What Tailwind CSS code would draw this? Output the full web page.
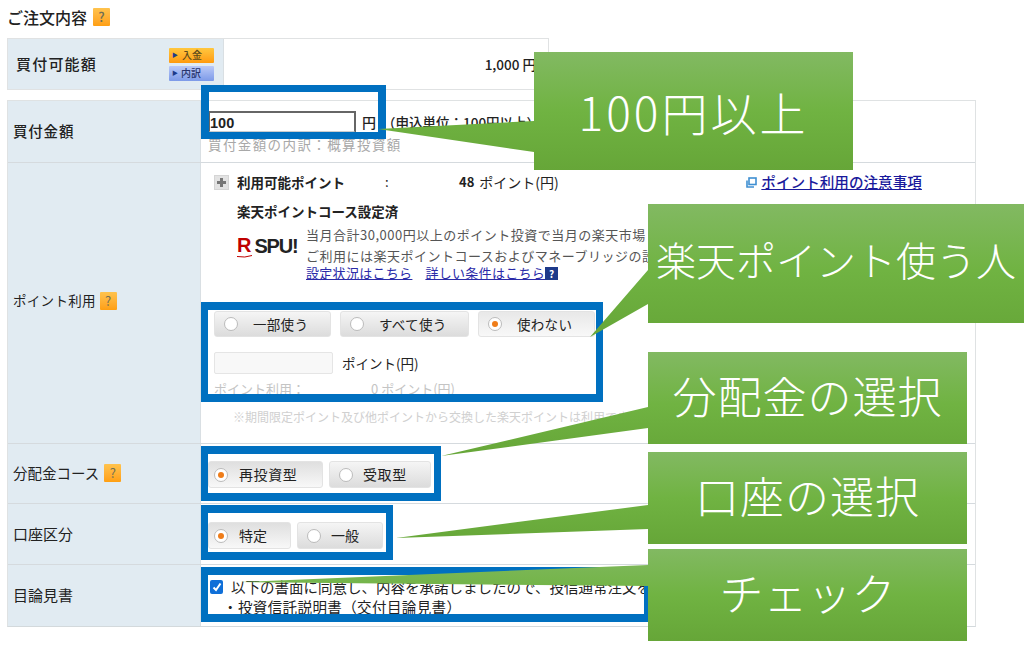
<!DOCTYPE html>
<html lang="ja">
<head>
    <meta charset="UTF-8">
    <title>ご注文内容</title>
    <script src="https://cdn.jsdelivr.net/npm/@tailwindcss/browser@4"></script>
</head>
<body class="bg-white">
<div class="relative w-[1024px] h-[649px] overflow-hidden text-[#222] text-[13px] font-['Noto_Sans_CJK_JP','Noto_Sans',sans-serif]">

    <!-- order form -->
    <div class="pl-[7px] pt-[7px]">
        <div class="flex items-center gap-[6px] h-[20px] font-medium text-[16px]">
            ご注文内容
            <span class="w-[17px] h-[18px] bg-linear-to-b from-[#ffc34d] to-[#ff9f10] text-[#6f6f55] text-[13px] leading-[18px] text-center rounded-[1px]">?</span>
        </div>

        <div class="mt-[11px] w-[542px] h-[52px] flex border border-[#e0e2e3]">
            <div class="w-[216px] bg-[#e1ebf2] flex items-center justify-between pl-[8px] pr-[9px] border-r border-[#d9dfe3]">
                <span class="font-medium text-[15px] tracking-[1.2px]">買付可能額</span>
                <div class="flex flex-col gap-[3px]">
                    <span class="w-[45px] h-[15px] flex items-center gap-[4px] pl-[3px] bg-linear-to-b from-[#ffc73e] to-[#ff9a0a] text-[10px] font-medium leading-none text-[#5d4a1b] rounded-[1px]"><span class="text-[#1d3a8a] text-[6px]">▶</span>入金</span>
                    <span class="w-[45px] h-[15px] flex items-center gap-[3px] pl-[3px] bg-linear-to-b from-[#bac9f7] to-[#7d9ae8] text-[10px] font-medium leading-none text-[#27346b] rounded-[1px]"><span class="text-[#1d3a8a] text-[6px]">▶</span>内訳</span>
                </div>
            </div>
            <div class="flex-1 flex items-center justify-end pr-[12px] font-medium text-[13.5px]">1,000 円</div>
        </div>

        <div class="mt-[10px] w-[969px] border border-[#dfe2e3] border-b-[#d3d9dc]">
            <!-- 買付金額 -->
            <div class="flex h-[62px] border-b border-[#d5dade]">
                <div class="w-[193px] bg-[#e1ebf2] border-r border-[#d9dfe3] flex items-center pl-[5px] pb-[1px] font-medium text-[14.5px] tracking-[0.8px]">買付金額</div>
                <div class="flex-1 pl-[7px] pt-[10px]">
                    <div class="flex items-center h-[22px]">
                        <div class="w-[148px] h-[22px] border-2 border-[#666] border-b-[#ccc] font-bold text-[14.5px] leading-[20px] font-['Liberation_Sans',sans-serif]">100</div>
                        <span class="ml-[6px] font-medium text-[14px]">円</span>
                        <span class="ml-[6px] font-medium text-[13.5px]">（申込単位：100円以上）</span>
                    </div>
                    <div class="mt-[1px] text-[13.5px] text-[#a8a8a8] leading-[20px] tracking-[1.4px]">買付金額の内訳：概算投資額</div>
                </div>
            </div>

            <!-- ポイント利用 -->
            <div class="flex h-[281px] border-b border-[#d5dade]">
                <div class="w-[193px] bg-[#e1ebf2] border-r border-[#d9dfe3] flex items-center gap-[4px] pl-[5px] pb-[5px] text-[13.5px] tracking-[0.3px]">
                    ポイント利用
                    <span class="w-[17px] h-[18px] bg-linear-to-b from-[#ffc34d] to-[#ff9f10] text-[#6f6f55] text-[13px] leading-[18px] text-center rounded-[1px]">?</span>
                </div>
                <div class="flex-1 pl-[13px] pt-[9px]">
                    <div class="flex items-center h-[20px]">
                        <span class="w-[15px] h-[15px] bg-[#e3e3e3] border border-[#d5d5d5] flex items-center justify-center">
                            <svg width="9" height="9" viewBox="0 0 9 9"><path d="M3 0h3v3h3v3H6v3H3V6H0V3h3z" fill="#777"/></svg>
                        </span>
                        <span class="ml-[8px] w-[148px] font-bold text-[13.5px]">利用可能ポイント</span>
                        <span class="w-[74px]">:</span>
                        <span class="font-bold">48</span>
                        <span class="ml-[5px] w-[267px] text-[14px]">ポイント(円)</span>
                        <svg width="11" height="11" viewBox="0 0 11 11" fill="none" stroke="#3f8fd2" stroke-width="1.6"><rect x="3" y="1" width="7" height="6.5"/><path d="M1 3.5v6.5h7"/></svg>
                        <a class="ml-[4px] text-[#1a1a9c] underline font-medium text-[14.6px]">ポイント利用の注意事項</a>
                    </div>
                    <div class="ml-[23px] mt-[9px] font-bold text-[13.5px] leading-[20px]">楽天ポイントコース設定済</div>
                    <div class="ml-[23px] mt-[4px] flex">
                        <div class="w-[69px] pt-[5px] flex items-center gap-[3px] h-[36px]">
                            <div class="relative">
                                <span class="font-bold text-[20px] leading-none text-[#bf0000] font-['Liberation_Sans',sans-serif]">R</span>
                                <svg class="absolute left-0 top-[20px]" width="15" height="3" viewBox="0 0 15 3"><path d="M0 1.5Q8 3 15 .5" stroke="#bf0000" stroke-width="1" fill="none"/></svg>
                            </div>
                            <span class="font-bold text-[20px] leading-none text-[#222] tracking-[-1.2px] font-['Liberation_Sans',sans-serif]">SPU!</span>
                        </div>
                        <div class="text-[#555] text-[13px] tracking-[0.5px] whitespace-nowrap">
                            <div class="leading-[20px]">当月合計30,000円以上のポイント投資で当月の楽天市場</div>
                            <div class="leading-[18px] mt-[2px]">ご利用には楽天ポイントコースおよびマネーブリッジの設定</div>
                            <div class="leading-[16px] flex items-center tracking-[0.3px]">
                                <a class="text-[#2b2ba8] underline">設定状況はこちら</a>
                                <a class="ml-[13px] text-[#2b2ba8] underline">詳しい条件はこちら</a>
                                <span class="w-[13px] h-[13px] bg-[#1e3a8a] text-white text-[10px] leading-[13px] text-center font-bold">?</span>
                            </div>
                        </div>
                    </div>
                    <div class="mt-[30px] flex gap-[9px] h-[26px] text-[13.5px] tracking-[0.3px]">
                        <div class="w-[117px] flex items-center bg-linear-to-b from-[#f5f5f5] to-[#dcdcdc] rounded-[3px] border border-[#e3e3e3] pl-[9px]">
                            <span class="w-[14px] h-[14px] rounded-full border border-[#bbb] bg-white"></span><span class="ml-[15px]">一部使う</span>
                        </div>
                        <div class="w-[129px] flex items-center bg-linear-to-b from-[#f5f5f5] to-[#dcdcdc] rounded-[3px] border border-[#e3e3e3] pl-[9px]">
                            <span class="w-[14px] h-[14px] rounded-full border border-[#bbb] bg-white"></span><span class="ml-[15px]">すべて使う</span>
                        </div>
                        <div class="w-[117px] flex items-center bg-linear-to-b from-[#e8e8e8] to-[#f8f8f8] rounded-[3px] border border-[#e3e3e3] pl-[9px]">
                            <span class="w-[14px] h-[14px] rounded-full border border-[#bbb] bg-white flex items-center justify-center"><span class="w-[6px] h-[6px] rounded-full bg-[#ef7d1a]"></span></span><span class="ml-[15px]">使わない</span>
                        </div>
                    </div>
                    <div class="mt-[15px] flex items-center h-[22px]">
                        <div class="w-[119px] h-[22px] bg-[#f8f8f8] border border-[#e5e5e5] rounded-[2px]"></div>
                        <span class="ml-[9px] text-[13.5px]">ポイント(円)</span>
                    </div>
                    <div class="mt-[5px] flex text-[#c4c4c4] leading-[20px]">
                        <span class="w-[157px]">ポイント利用：</span>
                        <span>0 ポイント(円)</span>
                    </div>
                    <div class="ml-[19px] mt-[8px] text-[#d0d0d0] text-[12px] leading-[20px] whitespace-nowrap">※期間限定ポイント及び他ポイントから交換した楽天ポイントは利用できません。</div>
                </div>
            </div>

            <!-- 分配金コース -->
            <div class="flex h-[60px] border-b border-[#d5dade]">
                <div class="w-[193px] bg-[#e1ebf2] border-r border-[#d9dfe3] flex items-center gap-[5px] pl-[5px] pb-[2px] text-[14.5px]">
                    分配金コース
                    <span class="w-[17px] h-[18px] bg-linear-to-b from-[#ffc34d] to-[#ff9f10] text-[#6f6f55] text-[13px] leading-[18px] text-center rounded-[1px]">?</span>
                </div>
                <div class="flex-1 pl-[7px] pt-[17px] flex gap-[6px] text-[14px] tracking-[0.6px]">
                    <div class="w-[115px] h-[27px] flex items-center bg-linear-to-b from-[#dfdfdf] to-[#f8f8f8] rounded-[3px] border border-[#e3e3e3] pl-[5px]">
                        <span class="w-[14px] h-[14px] rounded-full border border-[#bbb] bg-white flex items-center justify-center"><span class="w-[6px] h-[6px] rounded-full bg-[#ef7d1a]"></span></span><span class="ml-[11px]">再投資型</span>
                    </div>
                    <div class="w-[102px] h-[27px] flex items-center bg-linear-to-b from-[#f5f5f5] to-[#dcdcdc] rounded-[3px] border border-[#e3e3e3] pl-[9px]">
                        <span class="w-[14px] h-[14px] rounded-full border border-[#bbb] bg-white"></span><span class="ml-[10px]">受取型</span>
                    </div>
                </div>
            </div>

            <!-- 口座区分 -->
            <div class="flex h-[61px] border-b border-[#d5dade]">
                <div class="w-[193px] bg-[#e1ebf2] border-r border-[#d9dfe3] flex items-center pl-[5px] text-[15px]">口座区分</div>
                <div class="flex-1 pl-[7px] pt-[18px] flex gap-[6px] text-[14px]">
                    <div class="w-[83px] h-[27px] flex items-center bg-linear-to-b from-[#dfdfdf] to-[#f8f8f8] rounded-[3px] border border-[#e3e3e3] pl-[5px]">
                        <span class="w-[14px] h-[14px] rounded-full border border-[#bbb] bg-white flex items-center justify-center"><span class="w-[6px] h-[6px] rounded-full bg-[#ef7d1a]"></span></span><span class="ml-[11px]">特定</span>
                    </div>
                    <div class="w-[86px] h-[27px] flex items-center bg-linear-to-b from-[#f5f5f5] to-[#dcdcdc] rounded-[3px] border border-[#e3e3e3] pl-[9px]">
                        <span class="w-[14px] h-[14px] rounded-full border border-[#bbb] bg-white"></span><span class="ml-[10px]">一般</span>
                    </div>
                </div>
            </div>

            <!-- 目論見書 -->
            <div class="flex h-[61px]">
                <div class="w-[193px] bg-[#e1ebf2] border-r border-[#d9dfe3] flex items-center pl-[5px] text-[15px]">目論見書</div>
                <div class="flex-1 pl-[9px] pt-[12px] whitespace-nowrap text-[14.5px]">
                    <div class="flex items-center h-[20px]">
                        <span class="w-[13px] h-[14px] bg-[#0f6fd8] rounded-[2px] flex items-center justify-center">
                            <svg width="10" height="10" viewBox="0 0 10 10" fill="none" stroke="#fff" stroke-width="2"><path d="M1.5 5.5 4 8l4.5-6.5"/></svg>
                        </span>
                        <span class="ml-[8px]">以下の書面に同意し、内容を承諾しましたので、投信通常注文を行います。</span>
                    </div>
                    <div class="ml-[13px] leading-[20px] tracking-[0.4px]">・投資信託説明書（交付目論見書）</div>
                </div>
            </div>
        </div>
    </div>

    <!-- blue highlight boxes -->
    <div class="absolute left-[201px] top-[85px] w-[185px] h-[54px] border-x-[8px] border-y-[7px] border-[#0070c0]"></div>
    <div class="absolute left-[201px] top-[302px] w-[402px] h-[100px] border-x-[7px] border-y-[8px] border-[#0070c0]"></div>
    <div class="absolute left-[201px] top-[446px] w-[240px] h-[55px] border-x-[7px] border-y-[8px] border-[#0070c0]"></div>
    <div class="absolute left-[201px] top-[505px] w-[192px] h-[55px] border-x-[7px] border-y-[8px] border-[#0070c0]"></div>
    <div class="absolute left-[201px] top-[567px] w-[450px] h-[55px] border-x-[7px] border-y-[8px] border-[#0070c0]"></div>

    <!-- green callouts -->
    <svg class="absolute left-0 top-0" width="1024" height="649" viewBox="0 0 1024 649">
        <defs>
            <linearGradient id="g"><stop offset="0" stop-color="#82b962"/><stop offset="0.5" stop-color="#70b342"/><stop offset="1" stop-color="#66a638"/></linearGradient>
            <linearGradient id="g1" href="#g" gradientUnits="userSpaceOnUse" x1="0" y1="52" x2="0" y2="170"/>
            <linearGradient id="g2" href="#g" gradientUnits="userSpaceOnUse" x1="0" y1="204" x2="0" y2="337"/>
            <linearGradient id="g3" href="#g" gradientUnits="userSpaceOnUse" x1="0" y1="352" x2="0" y2="456"/>
            <linearGradient id="g4" href="#g" gradientUnits="userSpaceOnUse" x1="0" y1="452" x2="0" y2="544"/>
            <linearGradient id="g5" href="#g" gradientUnits="userSpaceOnUse" x1="0" y1="549" x2="0" y2="641"/>
        </defs>
        <path d="M534 52H853V170H534V152L378 129L534 121Z" fill="url(#g1)"/>
        <path d="M648 204H1024V323H648V304L590 337L648 270Z" fill="url(#g2)"/>
        <path d="M648 352H967V444H648V428L441 456L648 407Z" fill="url(#g3)"/>
        <path d="M648 452H967V544H648V529L396 538L648 505Z" fill="url(#g4)"/>
        <path d="M648 549H967V641H648V586L240 582L648 565Z" fill="url(#g5)"/>
    </svg>
    <div class="absolute left-[534px] top-[52px] w-[319px] h-[118px] flex items-center justify-center text-white font-light text-[46px] tracking-[3px] text-center">100円以上</div>
    <div class="absolute left-[648px] top-[204px] w-[376px] h-[110px] flex items-center justify-center text-white font-light text-[40px] text-center whitespace-nowrap">楽天ポイント使う人</div>
    <div class="absolute left-[648px] top-[352px] w-[319px] h-[86px] flex items-center justify-center text-white font-light text-[44px] tracking-[1px] text-center">分配金の選択</div>
    <div class="absolute left-[648px] top-[452px] w-[319px] h-[86px] flex items-center justify-center text-white font-light text-[44px] tracking-[1px] text-center">口座の選択</div>
    <div class="absolute left-[648px] top-[549px] w-[319px] h-[86px] flex items-center justify-center text-white font-light text-[44px] text-center">チェック</div>
</div>
</body>
</html>
